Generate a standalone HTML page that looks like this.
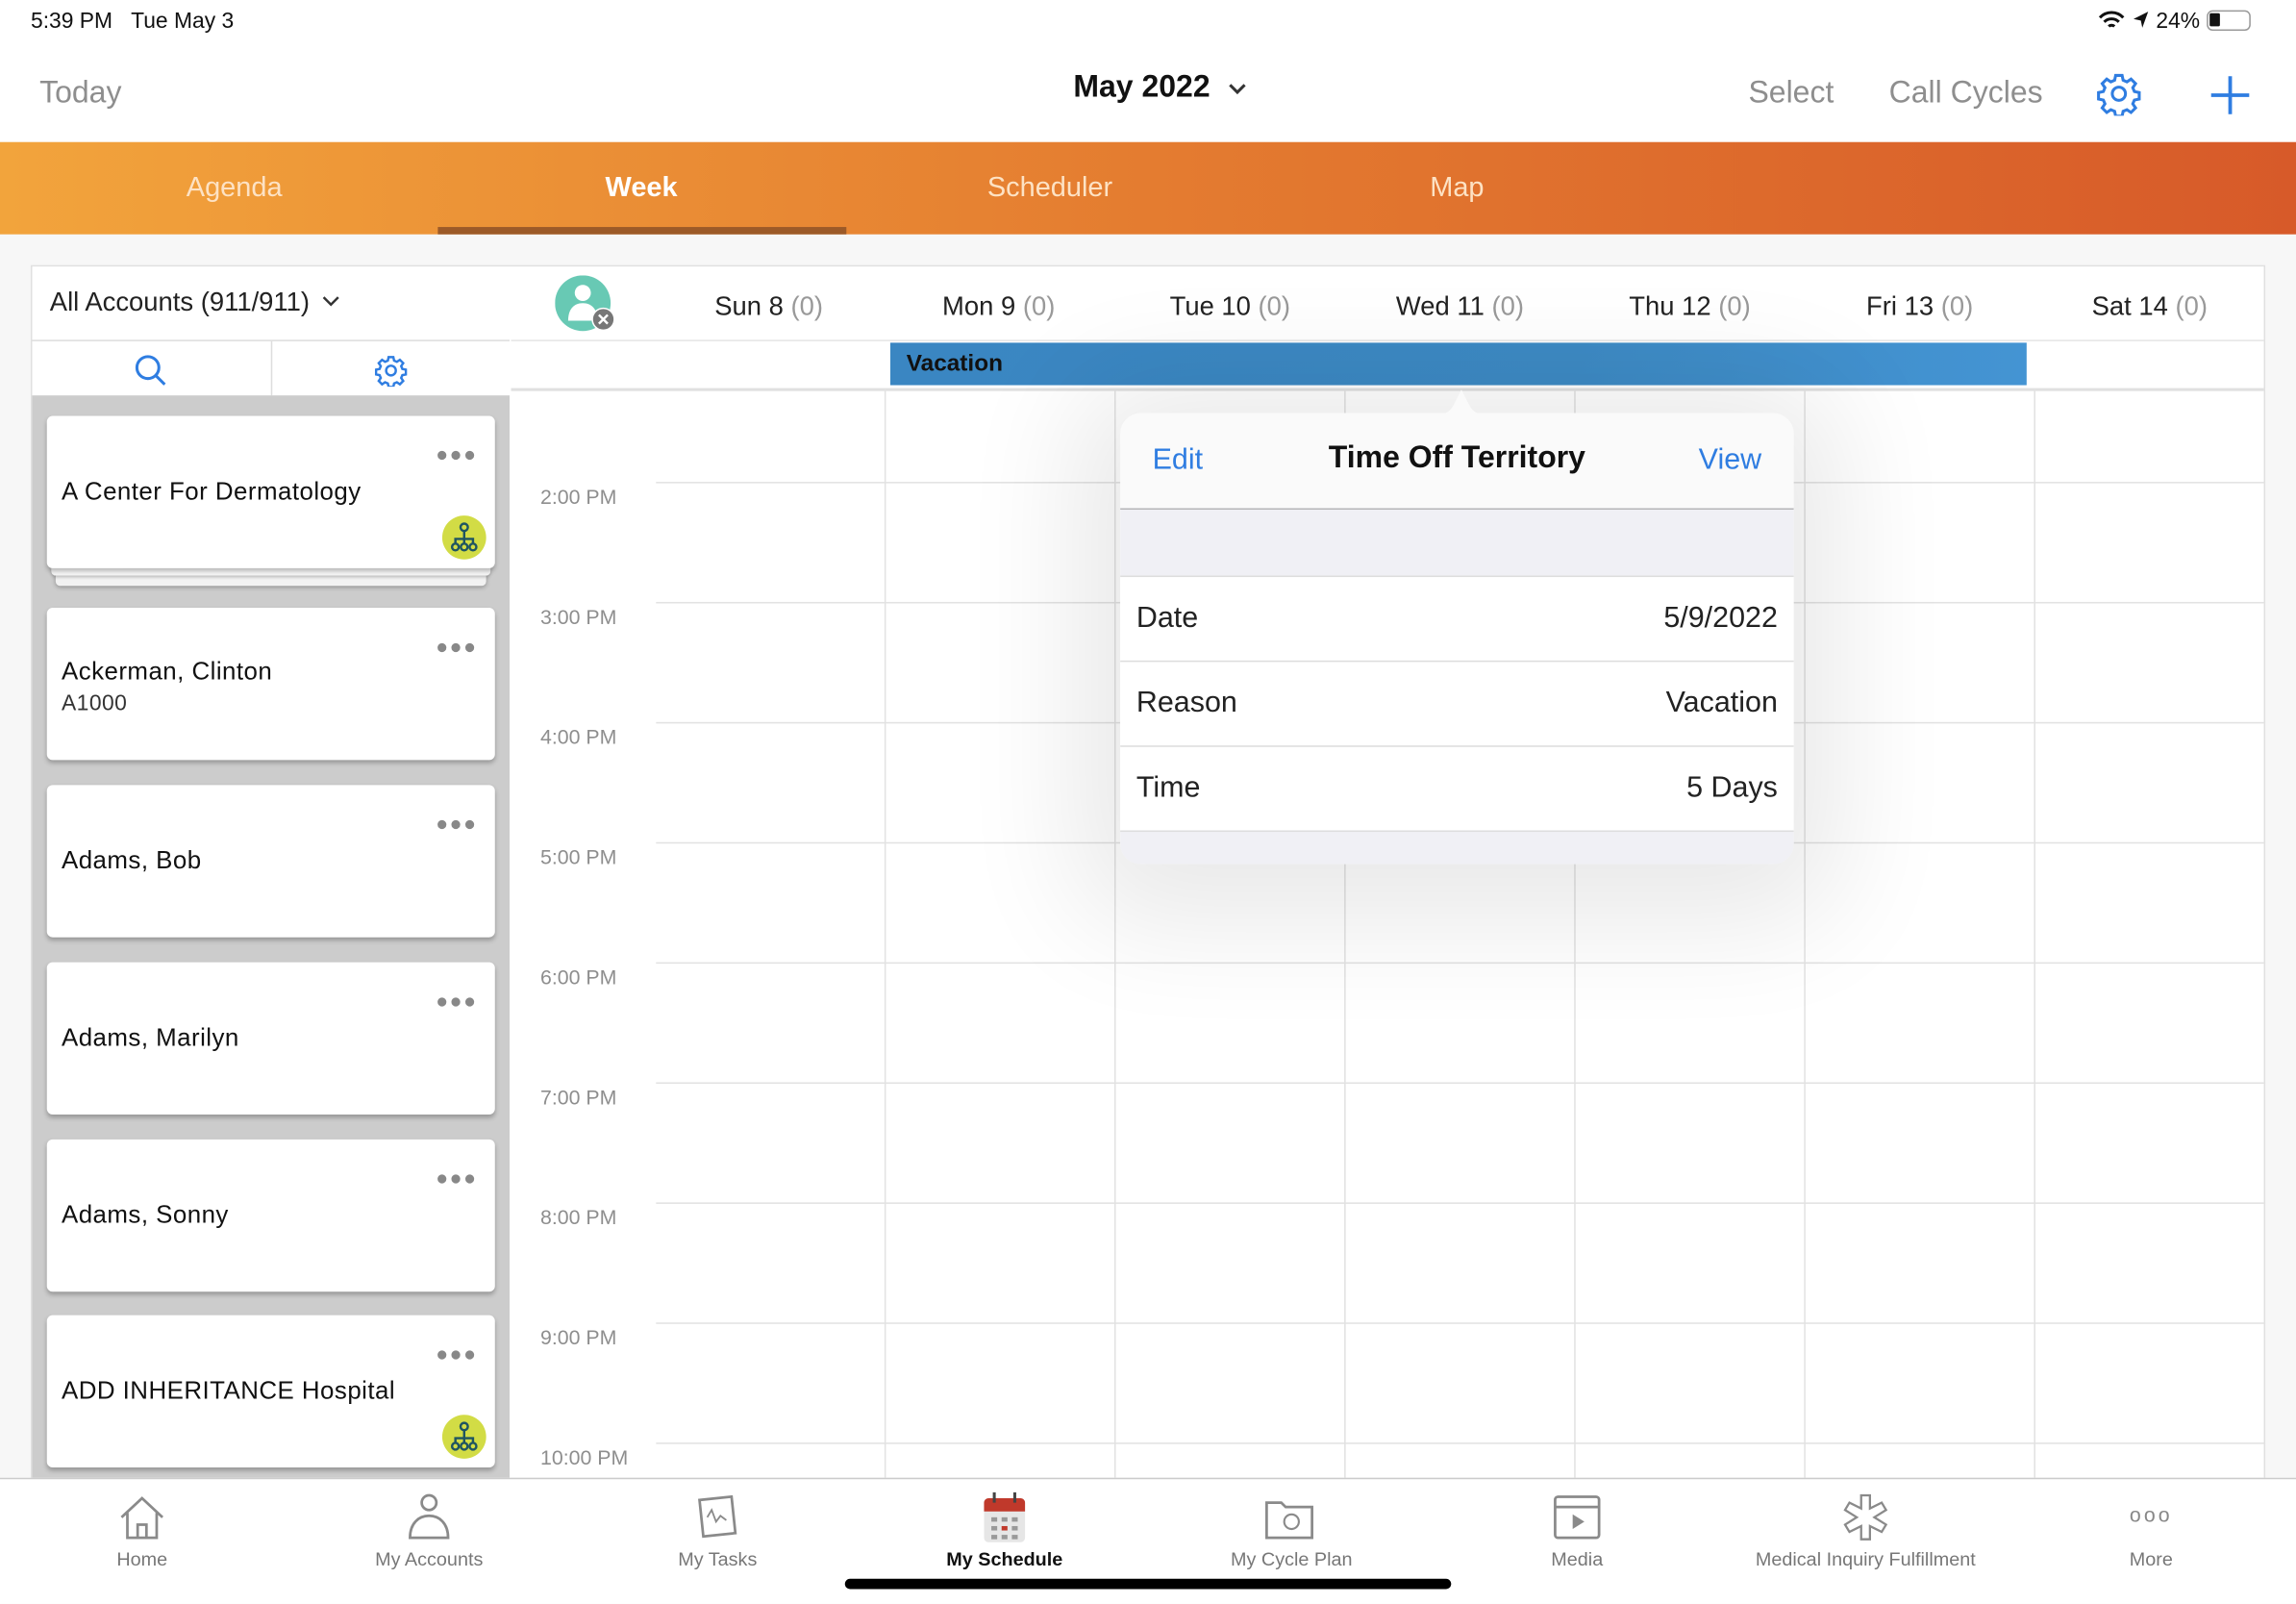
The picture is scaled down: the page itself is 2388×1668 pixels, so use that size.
<!DOCTYPE html>
<html><head><meta charset="utf-8"><style>
*{box-sizing:border-box;margin:0;padding:0}
html,body{width:2388px;height:1668px;overflow:hidden;background:#fff}
#s{position:absolute;left:0;top:0;width:1568px;height:1095px;transform:scale(1.523);transform-origin:0 0;font-family:"Liberation Sans",sans-serif;background:#f7f7f7;overflow:hidden}
.a{position:absolute}
.gl{position:absolute;left:448px;right:21px;height:1px;background:#e2e2e2}
.vl{position:absolute;top:266px;width:1px;height:744px;background:#e2e2e2}
.tl{position:absolute;left:369px;font-size:14px;color:#8e8e8e}
.day{position:absolute;top:199px;font-size:18px;color:#222;transform:translateX(-50%);white-space:nowrap}
.day span{color:#999}
.card{position:absolute;left:32px;width:306px;height:104px;background:#fff;border-radius:4px;box-shadow:0 2px 3px rgba(0,0,0,.25)}
.card .n{position:absolute;left:10px;top:42px;font-size:17px;color:#111;letter-spacing:.3px}
.dots{position:absolute;right:12px;top:18px;font-size:14px;color:#888;letter-spacing:1px}
.badge{position:absolute;right:6px;bottom:6px;width:30px;height:30px;border-radius:50%;background:#d2dc45}
.tab{position:absolute;top:1057px;font-size:13px;color:#777;transform:translateX(-50%);white-space:nowrap}
.ti{position:absolute;top:1018px;transform:translateX(-50%)}
.row{position:absolute;left:0;right:0;height:58px;border-top:1px solid #ddd;background:#fff;font-size:20px;color:#222}
.row .l{position:absolute;left:11px;top:17px}.row .r{position:absolute;right:11px;top:17px}
</style></head><body><div id="s">
<div class="a" style="left:0;top:0;width:1568px;height:97px;background:#fff"></div>
<div class="a" style="left:21px;top:6px;font-size:15px;color:#111">5:39 PM&nbsp;&nbsp;&nbsp;Tue May 3</div>
<div class="a" style="left:1432px;top:6px;font-size:15px;color:#111"><svg width="20" height="14" style="vertical-align:-2px"><path d="M2 5a11 11 0 0 1 16 0M5 8a7 7 0 0 1 10 0M8 11a3 3 0 0 1 4 0" stroke="#111" stroke-width="2" fill="none"/></svg> <svg width="12" height="12"><path d="M11 1L1 6l5 1 1 5z" fill="#111"/></svg> 24% <span style="display:inline-block;width:30px;height:14px;border:1.5px solid #999;border-radius:4px;vertical-align:-2px;position:relative"><span style="position:absolute;left:1px;top:1px;width:7px;height:9px;background:#111;border-radius:1px"></span></span></div>
<div class="a" style="left:27px;top:52px;font-size:21px;color:#8e8e8e">Today</div>
<div class="a" style="left:733px;top:48px;font-size:21px;color:#111;font-weight:bold">May 2022 <svg width="14" height="10" style="margin-left:6px"><path d="M2 2l5 5 5-5" stroke="#333" stroke-width="2" fill="none"/></svg></div>
<div class="a" style="left:1194px;top:52px;font-size:21px;color:#8e8e8e">Select</div>
<div class="a" style="left:1290px;top:52px;font-size:21px;color:#8e8e8e">Call Cycles</div>
<svg class="a" style="left:1432px;top:49px" width="30" height="30" viewBox="0 0 30 30"><circle cx="15" cy="15" r="4.5" stroke="#2f7de1" stroke-width="2" fill="none"/><path d="M12.8 2.5h4.4l.7 3.3 2.6 1.1 2.8-1.9 3.1 3.1-1.9 2.8 1.1 2.6 3.3.7v4.4l-3.3.7-1.1 2.6 1.9 2.8-3.1 3.1-2.8-1.9-2.6 1.1-.7 3.3h-4.4l-.7-3.3-2.6-1.1-2.8 1.9-3.1-3.1 1.9-2.8-1.1-2.6-3.3-.7v-4.4l3.3-.7 1.1-2.6-1.9-2.8 3.1-3.1 2.8 1.9 2.6-1.1z" stroke="#2f7de1" stroke-width="2" fill="none"/></svg>
<svg class="a" style="left:1508px;top:50px" width="30" height="30"><path d="M15 2v26M2 15h26" stroke="#2f7de1" stroke-width="2.5"/></svg>
<div class="a" style="left:0;top:97px;width:1568px;height:63px;background:linear-gradient(90deg,#f2a43c,#e47c30 50%,#d75a29)"></div>
<div class="a" style="left:299px;top:155px;width:279px;height:5px;background:#9c5a28"></div>
<div class="a" style="left:160px;top:118px;transform:translateX(-50%);font-size:19px;color:#fde2c4">Agenda</div>
<div class="a" style="left:438px;top:118px;transform:translateX(-50%);font-size:19px;color:#fff;font-weight:bold">Week</div>
<div class="a" style="left:717px;top:118px;transform:translateX(-50%);font-size:19px;color:#fde2c4">Scheduler</div>
<div class="a" style="left:995px;top:118px;transform:translateX(-50%);font-size:19px;color:#fde2c4">Map</div>

<div class="a" style="left:21px;top:181px;width:1526px;height:829px;background:#fff;border:1px solid #e0e0e0"></div>
<div class="a" style="left:22px;top:232px;width:326px;height:1px;background:#ddd"></div>
<div class="a" style="left:185px;top:233px;width:1px;height:37px;background:#ddd"></div>
<div class="a" style="left:34px;top:196px;font-size:18px;color:#222">All Accounts (911/911) <svg width="12" height="8" style="margin-left:4px;vertical-align:2px"><path d="M1 1l5 5 5-5" stroke="#333" stroke-width="1.6" fill="none"/></svg></div>
<svg class="a" style="left:91px;top:241px" width="24" height="24"><circle cx="10" cy="10" r="7.5" stroke="#2f7de1" stroke-width="2" fill="none"/><path d="M15.5 15.5l6 6" stroke="#2f7de1" stroke-width="2"/></svg>
<svg class="a" style="left:256px;top:242px" width="22" height="22" viewBox="0 0 30 30"><circle cx="15" cy="15" r="4.5" stroke="#2f7de1" stroke-width="2.2" fill="none"/><path d="M12.8 2.5h4.4l.7 3.3 2.6 1.1 2.8-1.9 3.1 3.1-1.9 2.8 1.1 2.6 3.3.7v4.4l-3.3.7-1.1 2.6 1.9 2.8-3.1 3.1-2.8-1.9-2.6 1.1-.7 3.3h-4.4l-.7-3.3-2.6-1.1-2.8 1.9-3.1-3.1 1.9-2.8-1.1-2.6-3.3-.7v-4.4l3.3-.7 1.1-2.6-1.9-2.8 3.1-3.1 2.8 1.9 2.6-1.1z" stroke="#2f7de1" stroke-width="2.2" fill="none"/></svg>
<div class="a" style="left:22px;top:270px;width:326px;height:740px;background:#cccccc"></div>
<div class="a" style="left:38px;top:388px;width:294px;height:12px;background:#f2f2f2;border-radius:3px;box-shadow:0 1px 3px rgba(0,0,0,.3)"></div>
<div class="a" style="left:35px;top:385px;width:300px;height:8px;background:#f6f6f6;border-radius:3px;box-shadow:0 1px 2px rgba(0,0,0,.25)"></div>
<div class="card" style="top:284px"><div class="dots">●●●</div><div class="n">A Center For Dermatology</div><div class="badge"><svg width="30" height="30"><g stroke="#1f5561" stroke-width="1.6" fill="none"><circle cx="15" cy="8" r="2.5"/><path d="M15 10.5v4M9 19v-3h12v3M15 14.5V19"/><circle cx="9" cy="21.5" r="2.3"/><circle cx="15" cy="21.5" r="2.3"/><circle cx="21" cy="21.5" r="2.3"/></g></svg></div></div>
<div class="card" style="top:415px"><div class="dots">●●●</div><div class="n" style="top:34px">Ackerman, Clinton<div style="font-size:15px;color:#333;margin-top:3px">A1000</div></div></div>
<div class="card" style="top:536px"><div class="dots">●●●</div><div class="n">Adams, Bob</div></div>
<div class="card" style="top:657px"><div class="dots">●●●</div><div class="n">Adams, Marilyn</div></div>
<div class="card" style="top:778px"><div class="dots">●●●</div><div class="n">Adams, Sonny</div></div>
<div class="card" style="top:898px"><div class="dots">●●●</div><div class="n">ADD INHERITANCE Hospital</div><div class="badge"><svg width="30" height="30"><g stroke="#1f5561" stroke-width="1.6" fill="none"><circle cx="15" cy="8" r="2.5"/><path d="M15 10.5v4M9 19v-3h12v3M15 14.5V19"/><circle cx="9" cy="21.5" r="2.3"/><circle cx="15" cy="21.5" r="2.3"/><circle cx="21" cy="21.5" r="2.3"/></g></svg></div></div>

<div class="a" style="left:349px;top:232px;width:1197px;height:1px;background:#e5e5e5"></div>
<div class="a" style="left:349px;top:265px;width:1197px;height:2px;background:#e0e0e0"></div>
<svg class="a" style="left:379px;top:188px" width="42" height="40"><circle cx="19" cy="19" r="19" fill="#68c9b4"/><circle cx="19" cy="12" r="5.5" fill="#fff"/><path d="M9 31c0-8 4-12 10-12s10 4 10 12z" fill="#fff"/><circle cx="33" cy="30" r="7.5" fill="#777" stroke="#fff" stroke-width="1"/><path d="M30 27l6 6M36 27l-6 6" stroke="#fff" stroke-width="1.6"/></svg>
<div class="day" style="left:525px">Sun 8 <span>(0)</span></div>
<div class="day" style="left:682px">Mon 9 <span>(0)</span></div>
<div class="day" style="left:840px">Tue 10 <span>(0)</span></div>
<div class="day" style="left:997px">Wed 11 <span>(0)</span></div>
<div class="day" style="left:1154px">Thu 12 <span>(0)</span></div>
<div class="day" style="left:1311px">Fri 13 <span>(0)</span></div>
<div class="day" style="left:1468px">Sat 14 <span>(0)</span></div>
<div class="a" style="left:608px;top:234px;width:776px;height:29px;background:linear-gradient(90deg,#3a86c2,#3d8ac4 60%,#4494d3);color:#111;font-weight:bold;font-size:16px;padding:6px 11px">Vacation</div>
<div class="vl" style="left:604px"></div><div class="vl" style="left:761px"></div><div class="vl" style="left:918px"></div><div class="vl" style="left:1075px"></div><div class="vl" style="left:1232px"></div><div class="vl" style="left:1389px"></div>
<div class="gl" style="top:329px"></div><div class="gl" style="top:411px"></div><div class="gl" style="top:493px"></div><div class="gl" style="top:575px"></div><div class="gl" style="top:657px"></div><div class="gl" style="top:739px"></div><div class="gl" style="top:821px"></div><div class="gl" style="top:903px"></div><div class="gl" style="top:985px"></div>
<div class="tl" style="top:331px">2:00 PM</div><div class="tl" style="top:413px">3:00 PM</div><div class="tl" style="top:495px">4:00 PM</div><div class="tl" style="top:577px">5:00 PM</div><div class="tl" style="top:659px">6:00 PM</div><div class="tl" style="top:741px">7:00 PM</div><div class="tl" style="top:823px">8:00 PM</div><div class="tl" style="top:905px">9:00 PM</div><div class="tl" style="top:987px">10:00 PM</div>

<div class="a" style="left:765px;top:282px;width:460px;height:308px;border-radius:14px;background:#fafafa;box-shadow:0 10px 80px 30px rgba(0,0,0,.09);overflow:hidden">
 <div class="a" style="left:22px;top:21px;font-size:20px;color:#2f7de1">Edit</div>
 <div class="a" style="left:0;right:0;top:19px;text-align:center;font-size:21px;color:#111;font-weight:bold">Time Off Territory</div>
 <div class="a" style="right:22px;top:21px;font-size:20px;color:#2f7de1">View</div>
 <div class="a" style="left:0;right:0;top:65px;height:46px;background:#f0f0f5;border-top:1px solid #b5b5b8"></div>
 <div class="row" style="top:111px"><span class="l">Date</span><span class="r">5/9/2022</span></div>
 <div class="row" style="top:169px"><span class="l">Reason</span><span class="r">Vacation</span></div>
 <div class="row" style="top:227px"><span class="l">Time</span><span class="r">5 Days</span></div>
 <div class="a" style="left:0;right:0;top:285px;height:23px;background:#f0f0f5;border-top:1px solid #ddd"></div>
</div>
<svg class="a" style="left:981px;top:264px" width="34" height="20"><path d="M0 19C8 19 10 16 13 10L17 2L21 10C24 16 26 19 34 19Z" fill="#fafafa"/></svg>

<div class="a" style="left:0;top:1009px;width:1568px;height:86px;background:#fff;border-top:1px solid #ccc"></div>
<svg class="ti" style="left:97px" width="36" height="36"><path d="M4 18L18 5l14 13M8 15v17h20V15M15 32v-9h6v9" stroke="#8a8a8a" stroke-width="1.8" fill="none"/></svg>
<svg class="ti" style="left:293px" width="36" height="36"><circle cx="18" cy="8" r="5" stroke="#8a8a8a" stroke-width="1.8" fill="none"/><path d="M5 32c0-10 6-15 13-15s13 5 13 15z" stroke="#8a8a8a" stroke-width="1.8" fill="none"/></svg>
<svg class="ti" style="left:490px" width="36" height="36"><rect x="7" y="5" width="22" height="25" stroke="#8a8a8a" stroke-width="1.8" fill="none" transform="rotate(-6 18 18)"/><path d="M11 18l3-5 3 8 3-4 4 3" stroke="#8a8a8a" stroke-width="1.2" fill="none"/></svg>
<svg class="ti" style="left:686px" width="36" height="38"><rect x="4" y="5" width="28" height="30" rx="3" fill="#e6e6e6"/><path d="M4 8a3 3 0 0 1 3-3h22a3 3 0 0 1 3 3v6H4z" fill="#c0392b"/><path d="M11 1v7M25 1v7" stroke="#444" stroke-width="2"/><g fill="#999"><rect x="9" y="18" width="4" height="3"/><rect x="16" y="18" width="4" height="3"/><rect x="23" y="18" width="4" height="3"/><rect x="9" y="24" width="4" height="3"/><rect x="16" y="24" width="4" height="3" fill="#c0392b"/><rect x="23" y="24" width="4" height="3"/><rect x="9" y="30" width="4" height="3"/><rect x="16" y="30" width="4" height="3"/><rect x="23" y="30" width="4" height="3"/></g></svg>
<svg class="ti" style="left:882px" width="40" height="36"><path d="M3 8h10l3 3h18v21H3z" stroke="#8a8a8a" stroke-width="1.8" fill="none"/><circle cx="20" cy="21" r="5" stroke="#8a8a8a" stroke-width="1.4" fill="none"/></svg>
<svg class="ti" style="left:1077px" width="36" height="36"><rect x="3" y="4" width="30" height="28" rx="2" stroke="#8a8a8a" stroke-width="1.8" fill="none"/><path d="M3 11h30" stroke="#8a8a8a" stroke-width="1.8"/><path d="M15 16v10l8-5z" fill="#8a8a8a"/></svg>
<svg class="ti" style="left:1274px" width="36" height="36"><path d="M15 3h6v9l8-4 3 5-8 5 8 5-3 5-8-4v9h-6v-9l-8 4-3-5 8-5-8-5 3-5 8 4z" stroke="#8a8a8a" stroke-width="1.5" fill="none"/></svg>
<div class="ti" style="left:1469px;top:1026px;font-size:14px;color:#888;letter-spacing:2px">ooo</div>
<div class="tab" style="left:97px">Home</div>
<div class="tab" style="left:293px">My Accounts</div>
<div class="tab" style="left:490px">My Tasks</div>
<div class="tab" style="left:686px;color:#111;font-weight:bold">My Schedule</div>
<div class="tab" style="left:882px">My Cycle Plan</div>
<div class="tab" style="left:1077px">Media</div>
<div class="tab" style="left:1274px">Medical Inquiry Fulfillment</div>
<div class="tab" style="left:1469px">More</div>
<div class="a" style="left:577px;top:1078px;width:414px;height:7px;border-radius:4px;background:#000"></div>
</div></body></html>
